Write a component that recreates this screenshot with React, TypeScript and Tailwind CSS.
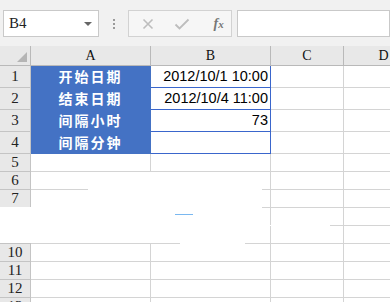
import React from "react";

const hdr = { fontFamily: '"Liberation Serif", "Times New Roman", serif' } as const;

function RowHeader({ n, h }: { n: number; h: string }) {
  return (
    <div
      className={`w-[31px] ${h} shrink-0 bg-[#e8e8e8] border-r border-b border-[#c4c4c4] flex items-center justify-center text-[15px] text-[#222]`}
      style={hdr}
    >
      {n}
    </div>
  );
}

const dataRows = [
  { label: "开始日期", value: "2012/10/1 10:00" },
  { label: "结束日期", value: "2012/10/4 11:00" },
  { label: "间隔小时", value: "73" },
  { label: "间隔分钟", value: "" },
];

export default function App() {
  return (
    <div
      className="relative w-[390px] h-[302px] overflow-hidden bg-white"
      style={{ fontFamily: '"Liberation Sans", Arial, "Noto Sans CJK SC", sans-serif' }}
    >
      {/* toolbar */}
      <div className="h-[46px] bg-[#f1f1f1] flex items-start pt-[10px] pl-[3px]">
        <div className="w-[100px] h-[27px] bg-white border border-[#c9c9c9] flex items-center justify-between pl-[5px] pr-[6px]">
          <span className="text-[15px] text-[#222]" style={hdr}>
            B4
          </span>
          <span className="w-0 h-0 border-l-[4px] border-r-[4px] border-t-[4px] border-l-transparent border-r-transparent border-t-[#666]" />
        </div>
        <div className="w-[31px] h-[27px] flex flex-col items-center justify-center gap-[2px]">
          <span className="w-[2px] h-[2px] bg-[#9a9a9a]" />
          <span className="w-[2px] h-[2px] bg-[#9a9a9a]" />
          <span className="w-[2px] h-[2px] bg-[#9a9a9a]" />
        </div>
        <div className="w-[109px] h-[27px] bg-[#f6f6f6] border border-[#d2d2d2] flex items-center">
          <svg width="12" height="12" viewBox="0 0 12 12" className="ml-[13px]">
            <path d="M1.5 1.5 L10.5 10.5 M10.5 1.5 L1.5 10.5" stroke="#bdbdbd" strokeWidth="1.6" fill="none" />
          </svg>
          <svg width="16" height="12" viewBox="0 0 16 12" className="ml-[20px]">
            <path d="M1.5 6.5 L5.5 10.5 L14.5 1.5" stroke="#bdbdbd" strokeWidth="1.8" fill="none" />
          </svg>
          <span
            className="ml-[23px] text-[14px] italic font-bold text-[#777] leading-none"
            style={hdr}
          >
            f<span className="text-[11px]">x</span>
          </span>
        </div>
        <div className="ml-[5px] w-[160px] h-[27px] bg-white border border-[#c9c9c9]" />
      </div>

      {/* column headers */}
      <div className="flex h-[20px]">
        <div className="relative w-[31px] shrink-0 bg-[#e8e8e8] border-r border-b border-[#b9b9b9]">
          <div
            className="absolute right-[3px] bottom-[3px] w-0 h-0"
            style={{ borderBottom: "10px solid #b5b5b5", borderLeft: "10px solid transparent" }}
          />
        </div>
        {[
          { l: "A", w: "w-[120px]" },
          { l: "B", w: "w-[120px]" },
          { l: "C", w: "w-[73px]" },
          { l: "D", w: "w-[80px]" },
        ].map((c) => (
          <div
            key={c.l}
            className={`${c.w} shrink-0 bg-[#e8e8e8] border-r border-b border-[#b9b9b9] flex items-center justify-center text-[14px] text-[#111]`}
            style={hdr}
          >
            {c.l}
          </div>
        ))}
      </div>

      {/* data rows 1-4 */}
      {dataRows.map((r, i) => (
        <div key={i} className="flex h-[22px]">
          <RowHeader n={i + 1} h="h-[22px]" />
          <div
            className="w-[120px] shrink-0 bg-[#4472c4] border-r border-b border-[#4472c4] flex items-center justify-center text-white font-bold text-[14px] tracking-[2px]"
            style={{ fontFamily: '"Noto Sans CJK SC", sans-serif' }}
          >
            {r.label}
          </div>
          <div className="w-[120px] shrink-0 bg-white border-r border-b border-[#3a66cc] flex items-center justify-end pr-[2px] text-[14.5px] text-black">
            {r.value}
          </div>
          <div className="w-[73px] shrink-0 border-r border-b border-[#d4d4d4]" />
          <div className="w-[80px] shrink-0 border-r border-b border-[#d4d4d4]" />
        </div>
      ))}

      {/* empty rows 5-13 */}
      {[5, 6, 7, 8, 9, 10, 11, 12, 13].map((n) => (
        <div key={n} className="flex h-[18px]">
          <RowHeader n={n} h="h-[18px]" />
          <div className="w-[120px] shrink-0 border-r border-b border-[#d4d4d4]" />
          <div className="w-[120px] shrink-0 border-r border-b border-[#d4d4d4]" />
          <div className="w-[73px] shrink-0 border-r border-b border-[#d4d4d4]" />
          <div className="w-[80px] shrink-0 border-r border-b border-[#d4d4d4]" />
        </div>
      ))}

      {/* white blotch (frame artefact) */}
      <div className="absolute left-0 top-[207px] w-[262px] h-[36px] bg-white" />
      <div className="absolute left-[88px] top-[172px] w-[174px] h-[35px] bg-white" />
      <div className="absolute left-[262px] top-[225px] w-[68px] h-[1px] bg-white" />
      <div className="absolute left-[180px] top-[243px] w-[65px] h-[1px] bg-white" />
      <div className="absolute left-[175px] top-[214px] w-[18px] h-[1px] bg-[#7ab8f0]" />
    </div>
  );
}
